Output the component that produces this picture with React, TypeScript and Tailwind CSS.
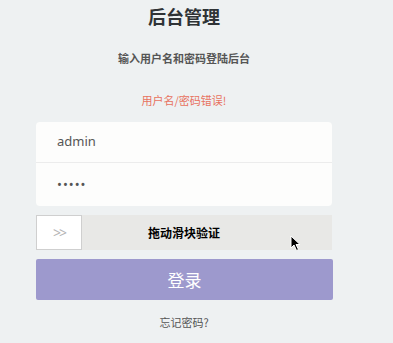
import { FC } from "react";

const font = { fontFamily: '"Noto Sans", "Noto Sans CJK SC", sans-serif' };

const Cursor: FC = () => (
  <svg
    className="absolute left-[290px] top-[235px]"
    width="12"
    height="17"
    viewBox="0 0 12 17"
  >
    <path
      d="M1 1 L1 13 L4 10 L6.5 15.5 L8.5 14.5 L6 9.5 L10 9.5 Z"
      fill="#000"
      stroke="#fff"
      strokeWidth="1"
    />
  </svg>
);

const App: FC = () => {
  return (
    <div
      className="relative w-[393px] h-[343px] bg-[#eef1f2] overflow-hidden"
      style={{ fontFamily: '"Noto Sans CJK SC", "Noto Sans", sans-serif' }}
    >
      <div className="ml-[36px] w-[296px] flex flex-col pt-[4px]">
        <h1 className="h-6 leading-6 text-center text-[18px] font-bold text-[#2f3336]">
          后台管理
        </h1>
        <p className="mt-[22px] h-4 leading-4 text-center text-[11px] font-bold text-[#555]">
          输入用户名和密码登陆后台
        </p>
        <p className="mt-[26px] h-4 leading-4 text-center text-[11px] text-[#e8715f]">
          用户名/密码错误!
        </p>

        <div className="mt-[14px] bg-[#fdfdfc] rounded-[4px] flex flex-col">
          <div
            className="h-[41px] flex items-center pl-[21px] text-[13px] text-[#555] border-b border-[#ececec]"
            style={font}
          >
            admin
          </div>
          <div className="h-[43px] flex items-center pl-[21px] text-[#555]">
            <span className="text-[13px] tracking-[1px]" style={font}>
              •••••
            </span>
          </div>
        </div>

        <div className="relative mt-[9px] h-[35px] bg-[#e8e8e6] flex items-center justify-center">
          <div className="absolute left-0 top-0 w-[46px] h-[35px] bg-white border border-[#cfcfcf] flex items-center justify-center">
            <span className="text-[14px] text-[#b5b5b5] tracking-[-2px]" style={font}>
              &gt;&gt;
            </span>
          </div>
          <span className="text-[12px] font-bold text-black">拖动滑块验证</span>
        </div>

        <button className="mt-[9px] h-[41px] w-[297px] bg-[#9d99cd] rounded-[2px] text-white text-[17px] flex items-center justify-center">
          登录
        </button>

        <p className="mt-[14px] h-4 leading-4 text-center text-[11px] text-[#555]">
          忘记密码?
        </p>
      </div>
      <Cursor />
    </div>
  );
};

export default App;
